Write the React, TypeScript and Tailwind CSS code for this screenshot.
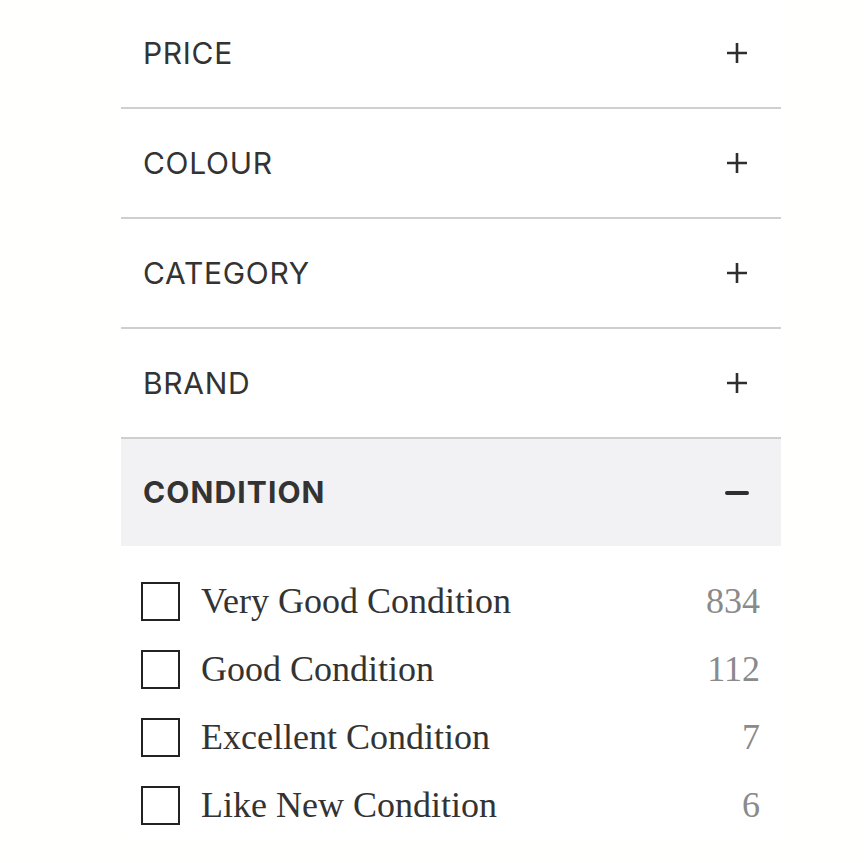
const headers = ["PRICE", "COLOUR", "CATEGORY", "BRAND"];

const conditions = [
  { label: "Very Good Condition", count: 834 },
  { label: "Good Condition", count: 112 },
  { label: "Excellent Condition", count: 7 },
  { label: "Like New Condition", count: 6 },
];

function Plus() {
  return (
    <svg width="22" height="22" viewBox="0 0 22 22" className="text-[#2e2e2e]">
      <path d="M11 1v20M1 11h20" stroke="currentColor" strokeWidth="2.6" />
    </svg>
  );
}

function Minus() {
  return (
    <svg width="24" height="22" viewBox="0 0 24 22" className="text-[#2e2e2e]">
      <path d="M2 11h20" stroke="currentColor" strokeWidth="4" strokeLinecap="round" />
    </svg>
  );
}

export default function App() {
  return (
    <div className="min-h-[863px] w-full bg-[#fffffd]">
      <div className="ml-[121px] w-[660px] bg-white mt-[-1px]">
        {headers.map((h) => (
          <div
            key={h}
            className="flex h-[110px] items-center justify-between border-b-2 border-[#cfcfcf] pl-[22px] pr-[33px]"
          >
            <span className="font-['Inter',sans-serif] text-[30px] tracking-[0.7px] text-[#333]">{h}</span>
            <Plus />
          </div>
        ))}
        <div className="flex h-[107px] items-center justify-between bg-[#f2f2f4] pl-[22px] pr-[32px]">
          <span className="font-['Inter',sans-serif] text-[30px] font-bold tracking-[1.1px] text-[#333]">CONDITION</span>
          <Minus />
        </div>
        <div className="pt-[21px] pl-[20px] pr-[21px]">
          {conditions.map((c) => (
            <label key={c.label} className="flex h-[68px] items-center">
              <span className="h-[39px] w-[39px] shrink-0 border-2 border-[#222] bg-white" />
              <span className="ml-[21px] flex-1 font-['Liberation_Serif',serif] text-[36px] leading-none text-[#333]">
                {c.label}
              </span>
              <span className="font-['Liberation_Serif',serif] text-[36px] leading-none text-[#8a8a8a]">{c.count}</span>
            </label>
          ))}
        </div>
      </div>
    </div>
  );
}
